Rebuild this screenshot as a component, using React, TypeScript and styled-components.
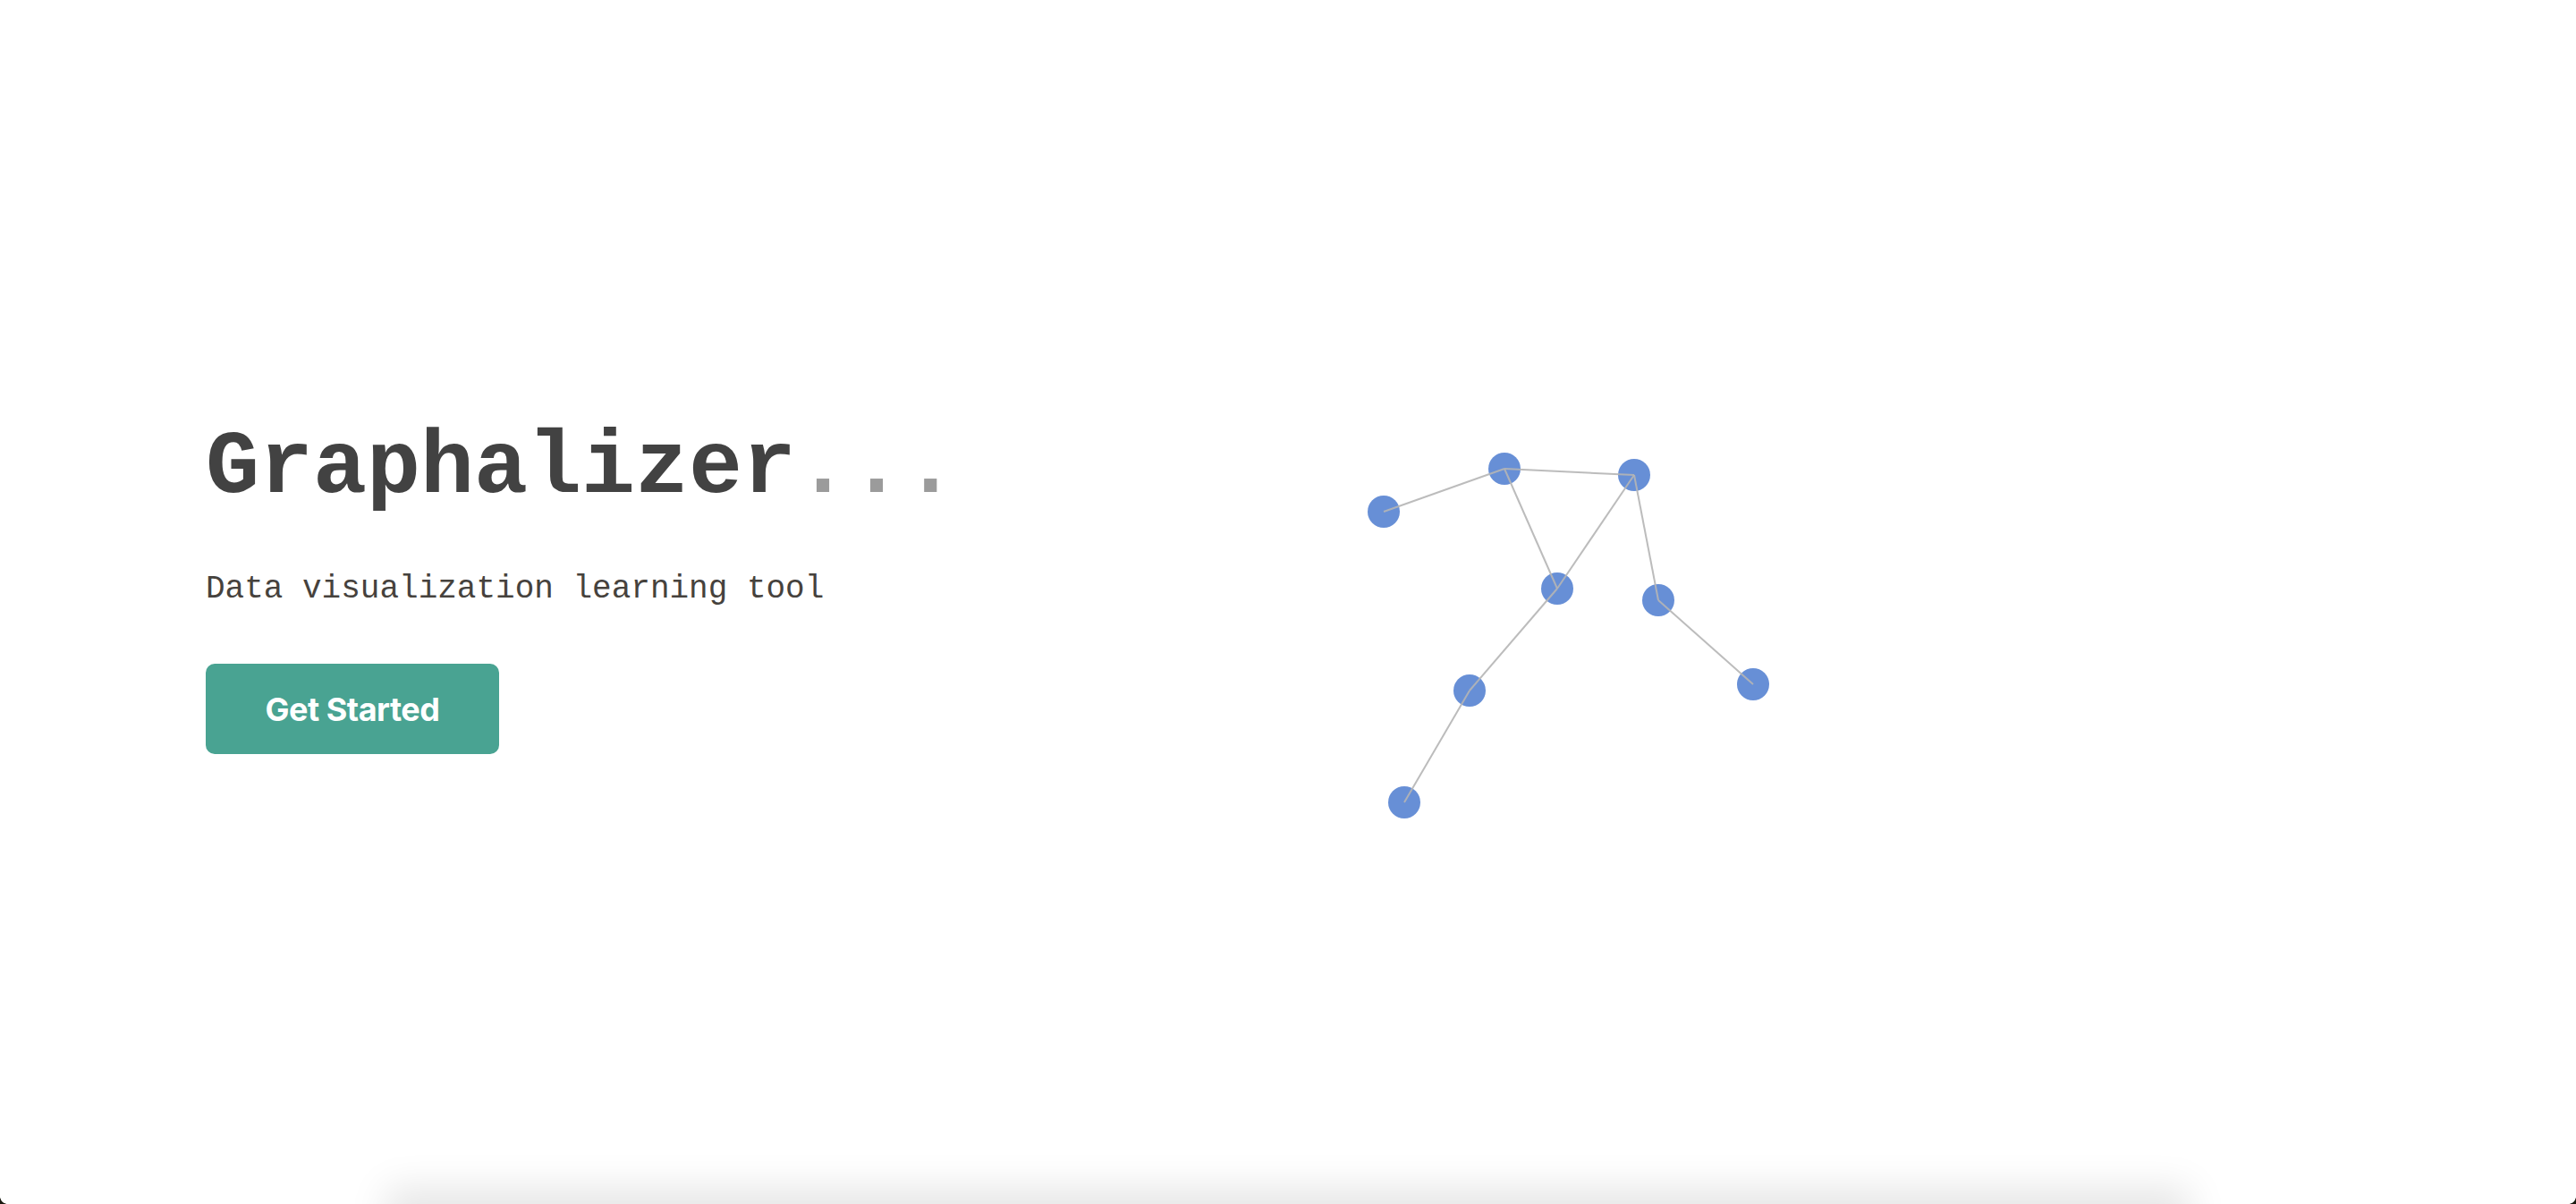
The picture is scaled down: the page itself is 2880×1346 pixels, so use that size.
import styled, { createGlobalStyle } from 'styled-components';

const GlobalStyle = createGlobalStyle`
  html, body {
    margin: 0;
    padding: 0;
    background: #fff;
  }
  body {
    font-family: "Liberation Mono", "Courier New", monospace;
    overflow: hidden;
  }
`;

const Hero = styled.section`
  height: 100vh;
  display: flex;
  align-items: center;
  padding-left: 230px;
  box-sizing: border-box;
`;

const Intro = styled.div`
  flex: none;
  width: 1170px;
  margin-top: -39px;
  display: flex;
  flex-direction: column;
  align-items: flex-start;
`;

const Title = styled.h1`
  margin: 0;
  font-family: "Liberation Mono", "Courier New", monospace;
  font-weight: 700;
  font-size: 100px;
  line-height: 120px;
  color: #424242;
`;

const Dots = styled.span`
  color: #9b9b9b;
`;

const Subtitle = styled.p`
  margin: 53px 0 0;
  font-family: "Liberation Mono", "Courier New", monospace;
  font-size: 36px;
  line-height: 44px;
  color: #46423d;
`;

const StartButton = styled.button`
  margin-top: 61px;
  width: 328px;
  height: 101px;
  border: none;
  border-radius: 10px;
  background: #49a392;
  color: #fff;
  font-family: Inter, "Noto Sans", sans-serif;
  font-weight: 700;
  font-size: 36px;
  letter-spacing: -0.5px;
  cursor: pointer;
`;

const Graph = styled.svg`
  flex: none;
  width: 700px;
  height: 700px;
`;

const Node = styled.circle`
  fill: #678fd6;
`;

const Edge = styled.line`
  stroke: #b5b5b5;
  stroke-width: 2;
  stroke-opacity: 0.9;
`;

const NextSection = styled.section`
  width: 70%;
  height: 400px;
  margin: 0 auto;
  background: #fff;
  box-shadow: 0 -18px 40px rgba(0, 0, 0, 0.1);
`;

const Corner = styled.div<{ side: 'left' | 'right' }>`
  position: fixed;
  bottom: 0;
  ${p => p.side}: 0;
  width: 8px;
  height: 8px;
  background: radial-gradient(
    circle at ${p => (p.side === 'left' ? 'top right' : 'top left')},
    transparent 7.5px,
    #1a1a10 8px
  );
  z-index: 10;
`;

const NODES = [
  { x: 147, y: 249 },
  { x: 282, y: 201 },
  { x: 427, y: 208 },
  { x: 341, y: 335 },
  { x: 454, y: 348 },
  { x: 243, y: 449 },
  { x: 560, y: 442 },
  { x: 170, y: 574 },
];

const EDGES: [number, number][] = [
  [0, 1],
  [1, 2],
  [1, 3],
  [2, 3],
  [2, 4],
  [3, 5],
  [4, 6],
  [5, 7],
];

export default function App() {
  return (
    <>
      <GlobalStyle />
      <Hero>
        <Intro>
          <Title>
            Graphalizer<Dots>...</Dots>
          </Title>
          <Subtitle>Data visualization learning tool</Subtitle>
          <StartButton>Get Started</StartButton>
        </Intro>
        <Graph viewBox="0 0 700 700">
          {NODES.map((n, i) => (
            <Node key={i} cx={n.x} cy={n.y} r={18} />
          ))}
          {EDGES.map(([a, b], i) => (
            <Edge
              key={i}
              x1={NODES[a].x}
              y1={NODES[a].y}
              x2={NODES[b].x}
              y2={NODES[b].y}
            />
          ))}
        </Graph>
      </Hero>
      <NextSection />
      <Corner side="left" />
      <Corner side="right" />
    </>
  );
}
